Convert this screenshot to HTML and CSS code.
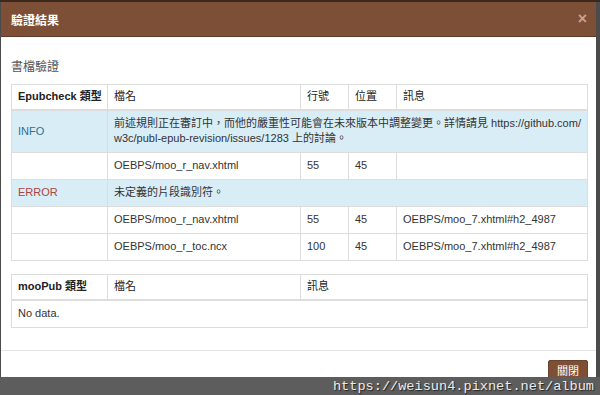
FILE: index.html
```html
<!DOCTYPE html>
<html>
<head>
<meta charset="utf-8">
<link rel="stylesheet" href="styles.css">
</head>
<body>
<div class="modal">
  <div class="modal-header">
    <h4 class="modal-title">驗證結果</h4>
    <span class="close">×</span>
  </div>
  <div class="modal-body">
    <h5 class="section-title">書檔驗證</h5>
    <table class="tbl">
      <colgroup><col class="c1"><col class="c2"><col class="c3"><col class="c4"><col></colgroup>
      <thead>
        <tr><th>Epubcheck 類型</th><th class="light">檔名</th><th class="light">行號</th><th class="light">位置</th><th class="light">訊息</th></tr>
      </thead>
      <tbody>
        <tr class="info"><td class="t-info">INFO</td><td colspan="4" class="wrap">前述規則正在審訂中，而他的嚴重性可能會在未來版本中調整變更。詳情請見 https://github.com/w3c/publ-epub-revision/issues/1283 上的討論。</td></tr>
        <tr><td></td><td>OEBPS/moo_r_nav.xhtml</td><td>55</td><td>45</td><td></td></tr>
        <tr class="info"><td class="t-error">ERROR</td><td colspan="4">未定義的片段識別符。</td></tr>
        <tr><td></td><td>OEBPS/moo_r_nav.xhtml</td><td>55</td><td>45</td><td>OEBPS/moo_7.xhtml#h2_4987</td></tr>
        <tr><td></td><td>OEBPS/moo_r_toc.ncx</td><td>100</td><td>45</td><td>OEBPS/moo_7.xhtml#h2_4987</td></tr>
      </tbody>
    </table>
    <table class="tbl tbl2">
      <colgroup><col class="c1"><col class="c2b"><col></colgroup>
      <thead>
        <tr><th>mooPub 類型</th><th class="light">檔名</th><th class="light">訊息</th></tr>
      </thead>
      <tbody>
        <tr><td colspan="3">No data.</td></tr>
      </tbody>
    </table>
  </div>
  <div class="modal-footer">
    <button class="btn">關閉</button>
  </div>
</div>
<div class="watermark">https://weisun4.pixnet.net/album</div>
</body>
</html>
```
FILE: styles.css
```css
html, body {
  margin: 0;
  padding: 0;
}
body {
  width: 600px;
  height: 395px;
  overflow: hidden;
  background: #4b4b4b;
  border-top: 2px solid #3a281d;
  box-sizing: border-box;
  font-family: "Liberation Sans", Arial, "Noto Sans CJK TC", sans-serif;
  font-size: 11px;
  color: #333;
  position: relative;
}
.modal {
  margin-left: 1px;
  width: 595px;
  background: #fff;
}
.modal-header {
  background: #7d4f36;
  height: 34px;
  border-bottom: 1px solid #5e3a27;
  display: flex;
  align-items: center;
  justify-content: space-between;
  padding: 0 9px 0 10px;
}
.modal-title {
  margin: 0;
  color: #fff;
  font-size: 12px;
  font-weight: bold;
}
.close {
  color: #c9a38e;
  font-size: 16px;
  font-weight: bold;
  line-height: 1;
}
.modal-body {
  padding: 22px 8px 0 10px;
}
.section-title {
  margin: 0 0 8px 0;
  font-size: 12px;
  font-weight: normal;
  color: #555;
  line-height: 17px;
  height: 17px;
}
.tbl {
  width: 577px;
  border-collapse: collapse;
  border: 1px solid #ddd;
  table-layout: fixed;
  margin-bottom: 13px;
}
.tbl th, .tbl td {
  padding: 5px 6px;
  line-height: 1.42857;
  text-align: left;
  vertical-align: middle;
  border: 1px solid #ddd;
}
.tbl th {
  padding: 4px 6px;
  font-weight: bold;
  color: #222;
  border-bottom: 2px solid #ddd;
  white-space: nowrap;
}
.tbl th.light {
  font-weight: normal;
}
.tbl td {
  height: 16px;
}
.tbl td.wrap {
  word-break: break-all;
}
.tbl .c1 { width: 96px; }
.tbl .c2 { width: 193px; }
.tbl .c3 { width: 48px; }
.tbl .c4 { width: 48px; }
.tbl .c2b { width: 193px; }
.tbl tr.info td {
  background: #d9edf7;
}
.t-info { color: #31708f; }
.t-error { color: #a94442; }
.tbl2 { margin-bottom: 22px; }
.modal-footer {
  border-top: 1px solid #e5e5e5;
  padding: 9px 8px 20px 0;
  display: flex;
  justify-content: flex-end;
}
.btn {
  background: #7d4f36;
  color: #fff;
  border: 1px solid #6a412b;
  font-family: "Liberation Sans", Arial, "Noto Sans CJK TC", sans-serif;
  font-size: 11px;
  line-height: 15px;
  padding: 3px 8px;
  border-radius: 2px;
}
.watermark {
  position: absolute;
  left: 0;
  right: 0;
  top: 375px;
  height: 20px;
  background: #5d5d5d;
  color: #ececec;
  font-family: "Liberation Mono", "Courier New", monospace;
  font-size: 13.6px;
  line-height: 20px;
  text-align: right;
  padding-right: 6px;
  text-shadow: 1px 1px 1px #222;
}
```
